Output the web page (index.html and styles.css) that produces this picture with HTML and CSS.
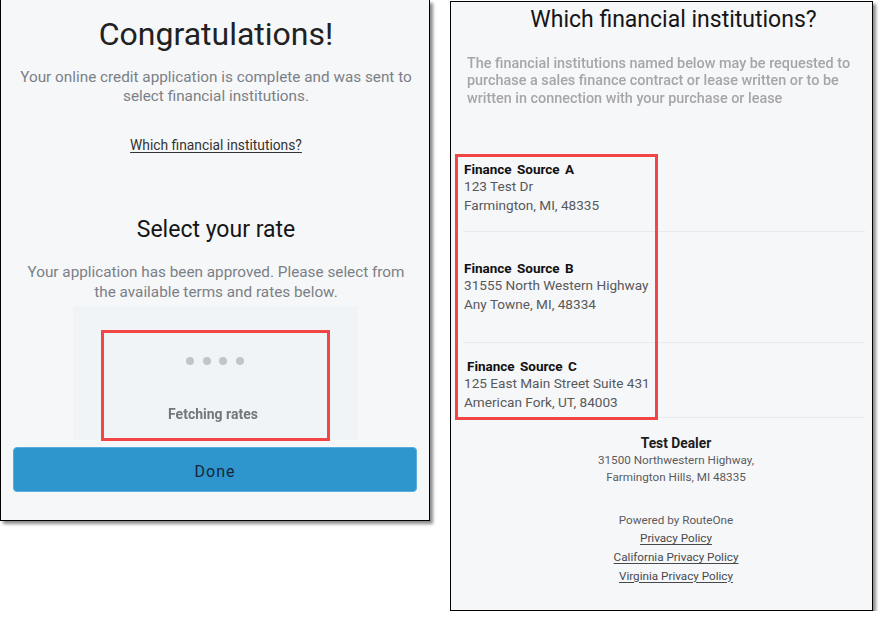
FILE: index.html
```html
<!DOCTYPE html>
<html lang="en">
<head>
<meta charset="utf-8">
<title>Congratulations</title>
<link rel="stylesheet" href="styles.css">
</head>
<body>
<div class="screens">
  <section class="card card-left">
    <h1 class="title">Congratulations!</h1>
    <p class="lead lead-top">Your online credit application is complete and was sent to<br>select financial institutions.</p>
    <a class="fi-link" href="#">Which financial institutions?</a>
    <h2 class="subtitle">Select your rate</h2>
    <p class="lead lead-rate">Your application has been approved. Please select from<br>the available terms and rates below.</p>
    <div class="rates">
      <div class="dots"><span></span><span></span><span></span><span></span></div>
      <div class="fetching">Fetching rates</div>
      <div class="mark mark-rates"></div>
    </div>
    <button class="done" type="button">Done</button>
  </section>

  <section class="card card-right">
    <h2 class="subtitle fi-title">Which financial institutions?</h2>
    <p class="fi-desc">The financial institutions named below may be requested to purchase a sales finance contract or lease written or to be written in connection with your purchase or lease</p>
    <div class="sources">
      <div class="source source-a">
        <div class="src-name">Finance Source A</div>
        <div class="src-line">123 Test Dr</div>
        <div class="src-line">Farmington, MI, 48335</div>
      </div>
      <div class="source source-b">
        <div class="src-name">Finance Source B</div>
        <div class="src-line">31555 North Western Highway</div>
        <div class="src-line">Any Towne, MI, 48334</div>
      </div>
      <div class="source source-c">
        <div class="src-name src-name-c">Finance Source C</div>
        <div class="src-line">125 East Main Street Suite 431</div>
        <div class="src-line">American Fork, UT, 84003</div>
      </div>
    </div>
    <div class="mark mark-sources"></div>
    <footer class="dealer">
      <div class="dealer-name">Test Dealer</div>
      <div class="dealer-line">31500 Northwestern Highway,</div>
      <div class="dealer-line">Farmington Hills, MI 48335</div>
      <div class="powered">Powered by RouteOne</div>
      <a class="policy" href="#">Privacy Policy</a>
      <a class="policy" href="#">California Privacy Policy</a>
      <a class="policy" href="#">Virginia Privacy Policy</a>
    </footer>
  </section>
</div>
</body>
</html>
```

FILE: styles.css
```css
* { box-sizing: border-box; }

html, body {
  margin: 0;
  padding: 0;
  background: #ffffff;
}

body {
  font-family: Roboto, "Liberation Sans", Arial, sans-serif;
  color: #222;
}

.screens {
  display: flex;
  align-items: flex-start;
  gap: 20px;
}

.card {
  position: relative;
  background: #f6f7f9;
  border: 1px solid #000;
  box-shadow: 3px 3px 3px rgba(0, 0, 0, 0.45);
  display: flex;
  flex-direction: column;
}

.card-left {
  width: 430px;
  height: 521px;
  border-top: none;
  align-items: center;
  text-align: center;
  padding-left: 2px;
}

.card-right {
  width: 423px;
  height: 610px;
  margin-top: 1px;
}

.title {
  margin: 14px 0 0;
  font-size: 32px;
  line-height: 40px;
  font-weight: 400;
  color: #212121;
}

.lead {
  margin: 0;
  font-size: 15.3px;
  color: #7b8086;
}

.lead-top {
  margin-top: 14px;
  line-height: 18.5px;
}

.fi-link {
  margin-top: 31px;
  font-size: 13.8px;
  line-height: 18px;
  color: #333;
  text-decoration: underline;
  text-underline-offset: 2px;
}

.subtitle {
  margin: 0;
  font-size: 23px;
  line-height: 28px;
  font-weight: 400;
  color: #151515;
}

.card-left .subtitle { margin-top: 62px; }

.lead-rate {
  margin-top: 19px;
  line-height: 19.5px;
}

.rates {
  position: relative;
  margin-top: 4px;
  width: 285px;
  height: 134px;
  background: #f1f4f7;
  display: flex;
  flex-direction: column;
  align-items: center;
  margin-left: -2px;
}

.dots {
  display: flex;
  gap: 8.5px;
  margin-top: 51px;
}

.dots span {
  width: 8px;
  height: 8px;
  border-radius: 50%;
  background: #c3c4c6;
  filter: blur(0.4px);
}

.fetching {
  margin-top: 40px;
  font-size: 14px;
  line-height: 18px;
  font-weight: 700;
  color: #73777c;
  filter: blur(0.35px);
  margin-left: -4px;
}

.mark {
  position: absolute;
  border: 3px solid #f24646;
  pointer-events: none;
}

.mark-rates {
  left: 28px;
  top: 24px;
  width: 229px;
  height: 111px;
}

.done {
  margin-top: 7px;
  margin-left: -2px;
  width: 404px;
  height: 45px;
  border: 1px solid #5aaede;
  border-radius: 4px;
  background: #2e96cc;
  color: #17263a;
  font-family: Roboto, "Liberation Sans", Arial, sans-serif;
  font-size: 16px;
  font-weight: 400;
  letter-spacing: 1px;
  padding: 3px 0 0;
}

/* right card */

.fi-title {
  margin-top: 4px;
  padding-left: 24px;
  text-align: center;
}

.fi-desc {
  margin: 21px 14px 0 16px;
  font-size: 14.4px;
  line-height: 17.3px;
  font-weight: 500;
  color: #a6a6a8;
  filter: blur(0.3px);
}

.sources {
  margin: 50px 7px 0 12px;
}

.source {
  border-bottom: 1px solid #e8eaed;
  padding-left: 1px;
}

.source-a { padding-top: 4px; padding-bottom: 16px; }
.source-b { padding-top: 27.5px; padding-bottom: 28px; }
.source-c { padding-top: 15px; padding-bottom: 4px; }

.src-name {
  font-size: 13.5px;
  line-height: 16px;
  font-weight: 700;
  color: #111;
  word-spacing: 2px;
}

.src-name-c { padding-left: 3px; }

.src-line {
  font-size: 13.6px;
  line-height: 19.2px;
  color: #58595b;
}

.mark-sources {
  left: 4px;
  top: 152px;
  width: 203px;
  height: 266px;
}

.dealer {
  margin-top: 16px;
  padding-left: 29px;
  display: flex;
  flex-direction: column;
  align-items: center;
  text-align: center;
}

.dealer-name {
  font-size: 13.8px;
  line-height: 18px;
  font-weight: 700;
  color: #1c1c1c;
}

.dealer-line {
  font-size: 11.7px;
  line-height: 17.5px;
  color: #5a5b5e;
}

.powered {
  margin-top: 24px;
  font-size: 11.7px;
  line-height: 18.7px;
  color: #5a5b5e;
}

.policy {
  font-size: 11.7px;
  line-height: 18.7px;
  color: #48494c;
  text-decoration: underline;
  text-underline-offset: 1.5px;
}
```
